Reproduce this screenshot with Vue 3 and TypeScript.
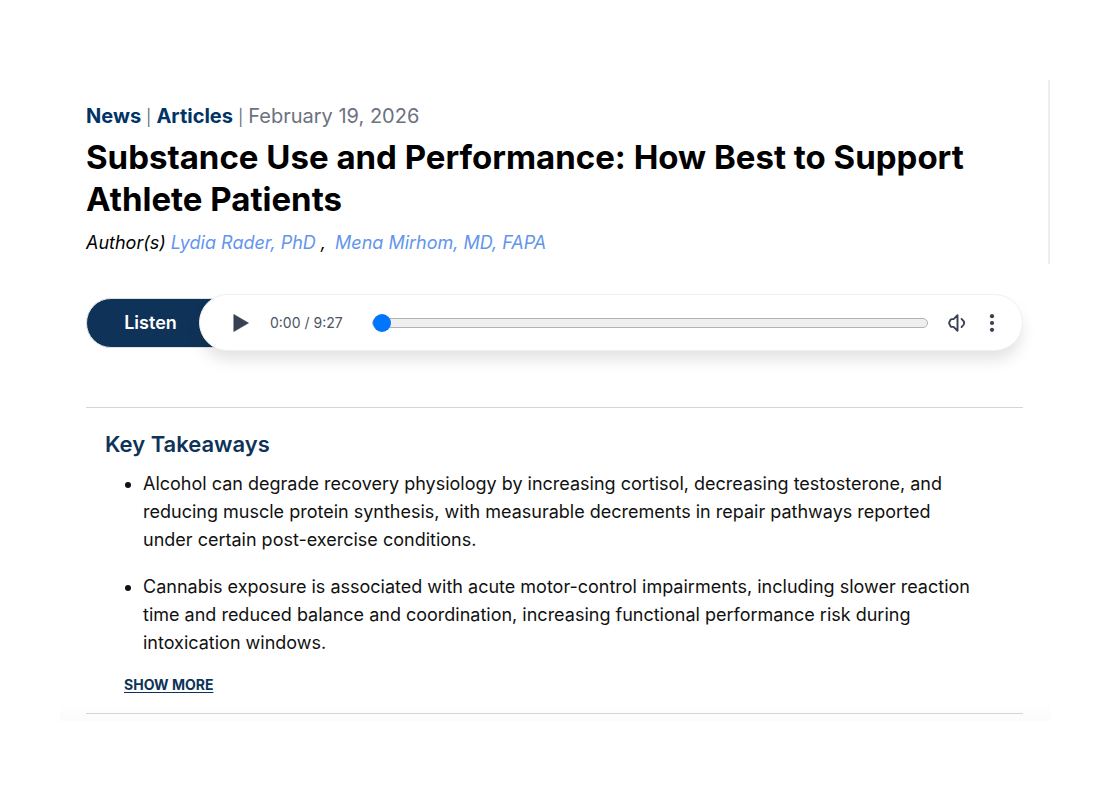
<script setup lang="ts">
import { ref } from 'vue'

interface Author {
  name: string
}

const authors: Author[] = [{ name: 'Lydia Rader, PhD' }, { name: 'Mena Mirhom, MD, FAPA' }]

const takeaways: string[][] = [
  [
    'Alcohol can degrade recovery physiology by increasing cortisol, decreasing testosterone, and',
    'reducing muscle protein synthesis, with measurable decrements in repair pathways reported',
    'under certain post-exercise conditions.',
  ],
  [
    'Cannabis exposure is associated with acute motor-control impairments, including slower reaction',
    'time and reduced balance and coordination, increasing functional performance risk during',
    'intoxication windows.',
  ],
]

const duration = 567
const position = ref(0)

function clock(seconds: number): string {
  return `${Math.floor(seconds / 60)}:${String(seconds % 60).padStart(2, '0')}`
}
</script>

<template>
  <main class="article">
    <header>
      <nav class="crumbs" aria-label="Breadcrumb">
        <a href="#news">News</a><span class="bar">|</span><a href="#articles">Articles</a><span class="bar">|</span><time datetime="2026-02-19">February 19, 2026</time>
      </nav>
      <h1>Substance Use and Performance: How Best to Support Athlete Patients</h1>
      <p class="authors">
        <span>Author(s)</span>
        <template v-for="(author, i) in authors" :key="author.name">
          <a href="#author">{{ author.name }}</a>
          <span v-if="i < authors.length - 1" class="comma">,</span>
        </template>
      </p>
    </header>

    <section class="player" aria-label="Audio player">
      <button type="button" class="listen">Listen</button>
      <div class="controls">
        <button type="button" class="icon play" aria-label="Play">
          <svg width="16" height="18" viewBox="0 0 16 18"><path d="M0.8 0.4 15.5 9 0.8 17.6Z" fill="#374151" stroke="#374151" stroke-width="0.6" stroke-linejoin="round" /></svg>
        </button>
        <span class="time">{{ clock(position) }} / {{ clock(duration) }}</span>
        <input v-model.number="position" class="seek" type="range" min="0" :max="duration" aria-label="Seek" />
        <button type="button" class="icon volume" aria-label="Volume">
          <svg width="18" height="18" viewBox="0 0 18 18" fill="none" stroke="#374151" stroke-width="1.9" stroke-linecap="round" stroke-linejoin="round">
            <path d="M9.5 1.2v15.6L5.6 12.9H3.8Q3.1 12.9 2.6 12.3L1.2 9.6V8.4L2.6 5.7Q3.1 5.1 3.8 5.1H5.6Z" />
            <path d="M13.6 4.9Q18.8 9 13.6 13.1" />
          </svg>
        </button>
        <button type="button" class="icon more" aria-label="More options">
          <svg width="6" height="18" viewBox="0 0 6 18" fill="#374151"><circle cx="3" cy="2.2" r="2.1" /><circle cx="3" cy="9" r="2.1" /><circle cx="3" cy="15.8" r="2.1" /></svg>
        </button>
      </div>
    </section>

    <section class="takeaways">
      <h2>Key Takeaways</h2>
      <ul>
        <li v-for="(lines, i) in takeaways" :key="i">
          <template v-for="(line, n) in lines" :key="n"><br v-if="n > 0" />{{ line }}</template>
        </li>
      </ul>
      <button type="button" class="show-more">SHOW MORE</button>
    </section>
  </main>
</template>

<style>
body {
  margin: 0;
  background: #fff;
}
</style>

<style scoped>
.article {
  position: relative;
  box-sizing: border-box;
  margin: 80px 60px;
  padding: 20px 27px 7px 26px;
  background: linear-gradient(to top, #fbfbfb, #fff 18px);
  color: #000;
  font-family: Inter, 'Liberation Sans', sans-serif;
}
.article::after {
  content: '';
  position: absolute;
  top: 0;
  right: 0;
  width: 2px;
  height: 184px;
  background: #ededed;
}
button {
  border: 0;
  padding: 0;
  background: none;
  font: inherit;
  cursor: pointer;
}
a {
  text-decoration: none;
}
.crumbs {
  color: #6b7280;
  font-size: 20px;
  line-height: 32px;
}
.crumbs a {
  color: #003366;
  font-weight: 700;
}
.bar {
  margin: 0 5px;
  font-size: 16px;
}
h1 {
  margin: 3px 0 0;
  font-size: 33px;
  font-weight: 700;
  line-height: 42px;
}
.authors {
  display: flex;
  gap: 5px;
  margin: 8px 0 0;
  font-size: 18px;
  font-style: italic;
  line-height: 30px;
}
.authors a {
  color: #6495ed;
}
.comma {
  margin-right: 4px;
}
.player {
  display: flex;
  align-items: center;
  margin-top: 36px;
}
.listen {
  box-sizing: border-box;
  flex: none;
  width: 153px;
  height: 50px;
  padding-right: 24px;
  border: 1px solid #e0e2e6;
  border-radius: 25px 0 0 25px;
  background: #0f3358;
  color: #fff;
  font-size: 18px;
  font-weight: 600;
}
.controls {
  position: relative;
  box-sizing: border-box;
  display: flex;
  flex: 1;
  align-items: center;
  height: 57px;
  margin-left: -40px;
  padding: 0 27px 0 33px;
  border: 1px solid #f0f0f0;
  border-radius: 29px;
  background: #fff;
  box-shadow: 0 10px 16px -2px rgba(0, 0, 0, 0.12);
}
.icon {
  display: flex;
}
.time {
  margin: 0 29px 0 21px;
  color: #4b5563;
  font-size: 14px;
}
.seek {
  flex: 1;
  min-width: 0;
  height: 18px;
  margin: 0 20px 0 0;
  appearance: none;
  background: none;
}
.seek::-webkit-slider-runnable-track {
  box-sizing: border-box;
  height: 10px;
  border: 1px solid #b2b2b2;
  border-radius: 5px;
  background: #efefef;
}
.seek::-webkit-slider-thumb {
  width: 18px;
  height: 18px;
  margin-top: -5px;
  appearance: none;
  border-radius: 50%;
  background: #0075ff;
}
.more {
  margin-left: 23px;
}
.takeaways {
  margin-top: 56px;
  padding: 20px 19px 17px;
  border-top: 1px solid #d1d5db;
  border-bottom: 1px solid #d1d5db;
}
h2 {
  margin: 0;
  color: #0f3358;
  font-size: 22px;
  font-weight: 600;
  line-height: 32px;
}
ul {
  margin: 10px 0 0;
  padding-left: 38px;
  color: #111;
  font-size: 18px;
  line-height: 28px;
}
li + li {
  margin-top: 19px;
}
.show-more {
  display: block;
  margin: 17px 0 0 19px;
  color: #0f3358;
  font-size: 14px;
  font-weight: 700;
  line-height: 22px;
  text-decoration: underline;
  text-underline-offset: 2px;
}
</style>
